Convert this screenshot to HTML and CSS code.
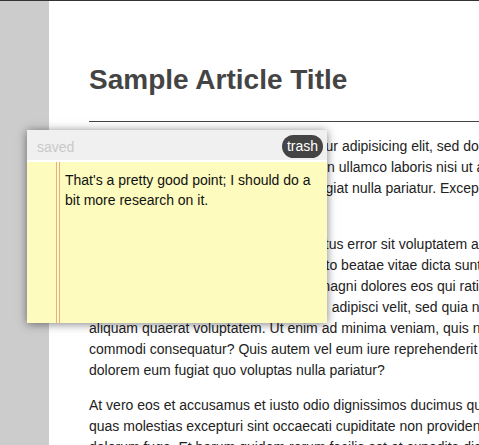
FILE: index.html
```html
<!DOCTYPE html>
<html>
<head>
<meta charset="utf-8">
<title>Sample Article</title>
<link rel="stylesheet" href="styles.css">
</head>
<body>
<div class="page">
  <aside class="gutter"></aside>
  <main class="article">
    <h1 class="title">Sample Article Title</h1>
    <hr class="rule">
    <p>Lorem ipsum dolor sit amet, consectetur adipisicing elit, sed do eiusmod tempor incididunt ut labore et dolore magna aliqua. Ut enim ad minim veniam, quis nostrud exercitation ullamco laboris nisi ut aliquip ex ea commodo consequat. Duis aute irure dolor in reprehenderit in voluptate velit esse cillum dolore eu fugiat nulla pariatur. Excepteur sint occaecat cupidatat non proident, sunt in culpa qui officia deserunt mollit anim id est laborum.</p>
    <p>Sed ut perspiciatis unde omnis iste natus error sit voluptatem accusantium doloremque laudantium, totam rem aperiam, eaque ipsa quae ab illo inventore veritatis et quasi architecto beatae vitae dicta sunt explicabo. Nemo enim ipsam voluptatem quia voluptas sit aspernatur aut odit aut fugit, sed quia consequuntur magni dolores eos qui ratione voluptatem sequi nesciunt. Neque porro quisquam est, qui dolorem ipsum quia dolor sit amet, consectetur, adipisci velit, sed quia non numquam eius modi tempora incidunt ut labore et dolore magnam aliquam quaerat voluptatem. Ut enim ad minima veniam, quis nostrum exercitationem ullam corporis suscipit laboriosam, nisi ut aliquid ex ea commodi consequatur? Quis autem vel eum iure reprehenderit qui in ea voluptate velit esse quam nihil molestiae consequatur, vel illum qui dolorem eum fugiat quo voluptas nulla pariatur?</p>
    <p>At vero eos et accusamus et iusto odio dignissimos ducimus qui blanditiis praesentium voluptatum deleniti atque corrupti quos dolores et quas molestias excepturi sint occaecati cupiditate non provident, similique sunt in culpa qui officia deserunt mollitia animi, id est laborum et dolorum fuga. Et harum quidem rerum facilis est et expedita distinctio. Nam libero tempore, cum soluta nobis est eligendi optio cumque nihil impedit quo minus id quod maxime placeat facere possimus, omnis voluptas assumenda est, omnis dolor repellendus.</p>
  </main>
</div>
<div class="note">
  <div class="note-head">
    <span class="note-status">saved</span>
    <button class="note-trash">trash</button>
  </div>
  <div class="note-body">
    <div class="note-text">That's a pretty good point; I should do a bit more research on it.</div>
  </div>
</div>
</body>
</html>
```
FILE: styles.css
```css
html, body {
  margin: 0;
  padding: 0;
}
body {
  overflow: hidden;
  background: #fff;
  font-family: "Liberation Sans", Arial, Helvetica, sans-serif;
  color: #222;
}
.page {
  display: flex;
  min-height: 100vh;
  border-top: 1px solid #333;
  box-sizing: border-box;
}
.gutter {
  flex: 0 0 49px;
  background: #cccccc;
}
.article {
  flex: 0 0 870px;
  width: 870px;
  padding: 63px 0 0 40px;
}
.title {
  margin: 0 0 25px;
  font-size: 28px;
  line-height: 32px;
  font-weight: bold;
  color: #444;
}
.rule {
  margin: 0 -200px 14px 0;
  border: 0;
  border-top: 1px solid #444;
  height: 0;
}
.article p {
  margin: 0 0 14px;
  font-size: 14px;
  line-height: 21px;
}
.note {
  position: absolute;
  left: 27px;
  top: 130px;
  width: 300px;
  height: 193px;
  display: flex;
  flex-direction: column;
  background: #fdfbbe;
  box-shadow: 0 1px 9px rgba(0, 0, 0, 0.5);
}
.note-head {
  flex: 0 0 30px;
  display: flex;
  align-items: center;
  justify-content: space-between;
  padding: 0 4px 0 10px;
  background: #f0f0f0;
  border-bottom: 2px solid #fff;
}
.note-status {
  font-size: 14px;
  color: #c9c9c9;
  margin-top: 3px;
}
.note-trash {
  margin-top: 2px;
  border: 0;
  padding: 2px 5px;
  border-radius: 12px;
  background: #444;
  color: #fff;
  font-family: "Liberation Sans", Arial, Helvetica, sans-serif;
  font-size: 14px;
  line-height: 19px;
}
.note-body {
  flex: 1;
  display: flex;
  padding-left: 29px;
}
.note-text {
  flex: 1;
  border-left: 4px double #e8ae8a;
  padding: 8px 8px 0 5px;
  font-size: 14px;
  line-height: 20px;
  color: #111;
}
```
